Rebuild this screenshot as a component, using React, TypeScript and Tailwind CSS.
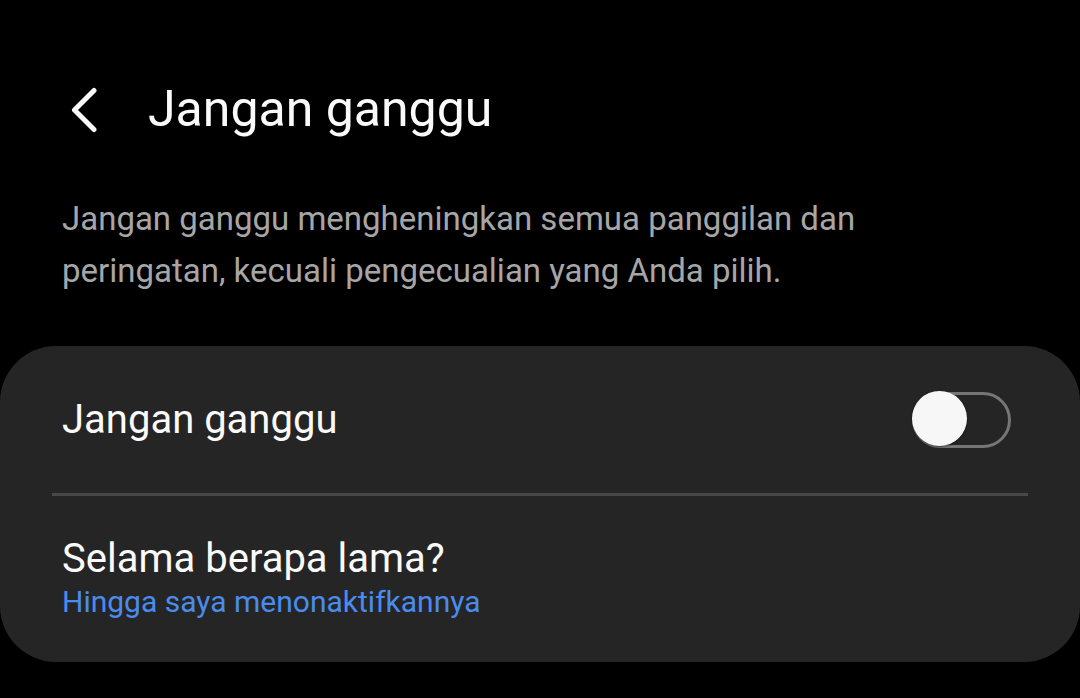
import React from "react";

const Toggle = ({ on }: { on: boolean }) => {
  return (
    <div className="relative w-[99px] h-[56px] rounded-full border-[3px] border-[#767676]">
      <div
        className={
          on
            ? "absolute right-[-3px] top-[-4px] w-[55px] h-[55px] rounded-full bg-[#f7f7f7] shadow-[0_1px_2px_rgba(0,0,0,0.5)]"
            : "absolute left-[-3px] top-[-4px] w-[55px] h-[55px] rounded-full bg-[#f7f7f7] shadow-[0_1px_2px_rgba(0,0,0,0.5)]"
        }
      />
    </div>
  );
};

const App = () => {
  return (
    <div className="w-[1080px] h-[698px] bg-black overflow-hidden font-['Roboto',sans-serif]">
      <div className="flex items-center pt-[79px] pl-[70px]">
        <svg width="28" height="46" viewBox="0 0 28 46" className="mt-[1px]">
          <path
            d="M24 3.5 L4.5 23 L24 42.5"
            fill="none"
            stroke="#fafafa"
            strokeWidth="5"
            strokeLinecap="round"
            strokeLinejoin="round"
          />
        </svg>
        <h1 className="ml-[50px] text-[50px] leading-[60px] text-[#fafafa]">
          Jangan ganggu
        </h1>
      </div>

      <p className="mt-[54px] px-[62px] text-[33px] leading-[52px] text-[#a6a6a6]">
        Jangan ganggu mengheningkan semua panggilan dan
        <br />
        peringatan, kecuali pengecualian yang Anda pilih.
      </p>

      <div className="mt-[49px] h-[316px] rounded-[56px] bg-[#252525] flex flex-col">
        <div className="h-[147px] flex items-center justify-between pl-[62px] pr-[69px]">
          <span className="text-[40px] leading-[48px] text-[#fafafa]">
            Jangan ganggu
          </span>
          <Toggle on={false} />
        </div>
        <div className="mx-[52px] h-[3px] bg-[#484848]" />
        <div className="flex flex-col pt-[39px] pl-[62px]">
          <span className="text-[40px] leading-[48px] text-[#fafafa]">
            Selama berapa lama?
          </span>
          <span className="text-[30px] leading-[38px] text-[#4a8cee]">
            Hingga saya menonaktifkannya
          </span>
        </div>
      </div>
    </div>
  );
};

export default App;
